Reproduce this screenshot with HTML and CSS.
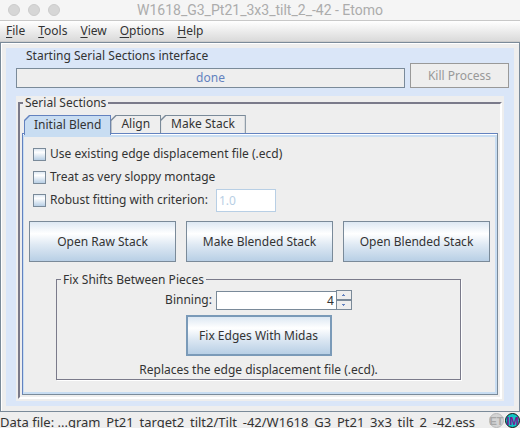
FILE: index.html
```html
<!DOCTYPE html>
<html lang="en">
<head>
<meta charset="utf-8">
<title>W1618_G3_Pt21_3x3_tilt_2_-42 - Etomo</title>
<link rel="stylesheet" href="styles.css">
</head>
<body>
<header class="titlebar">
  <div class="lights"><i></i><i></i><i></i></div>
  <h1>W1618_G3_Pt21_3x3_tilt_2_-42 - Etomo</h1>
</header>
<nav class="menubar">
  <button><u>F</u>ile</button>
  <button><u>T</u>ools</button>
  <button><u>V</u>iew</button>
  <button><u>O</u>ptions</button>
  <button><u>H</u>elp</button>
</nav>
<main class="frame">
  <div class="desk">
    <section class="process">
      <div class="progress">
        <div class="progress-label" id="progress-label">Starting Serial Sections interface</div>
        <div class="bar" role="progressbar" aria-labelledby="progress-label">done</div>
      </div>
      <button class="kill" disabled>Kill Process</button>
    </section>
    <div class="panel">
      <fieldset class="serial">
        <legend>Serial Sections</legend>
        <div class="tabs" role="tablist">
          <button class="tab selected" role="tab" aria-selected="true">Initial Blend</button>
          <button class="tab" role="tab" aria-selected="false">Align</button>
          <button class="tab" role="tab" aria-selected="false">Make Stack</button>
        </div>
        <div class="page" role="tabpanel">
          <div class="options">
            <label class="check"><input type="checkbox">Use existing edge displacement file (.ecd)</label>
            <label class="check"><input type="checkbox">Treat as very sloppy montage</label>
            <div class="criterion">
              <label class="check"><input type="checkbox">Robust fitting with criterion:</label>
              <input class="value" type="text" value="1.0" aria-label="Criterion" disabled>
            </div>
          </div>
          <div class="actions">
            <button class="push">Open Raw Stack</button>
            <button class="push">Make Blended Stack</button>
            <button class="push">Open Blended Stack</button>
          </div>
          <fieldset class="fix">
            <legend>Fix Shifts Between Pieces</legend>
            <div class="binning">
              <label for="binning">Binning:</label>
              <input id="binning" type="text" value="4">
              <div class="steps">
                <button aria-label="Increase"><svg viewBox="0 0 5 3"><path d="M2 0h1v1h1v1H1V1h1z"/></svg></button>
                <button aria-label="Decrease"><svg viewBox="0 0 5 3"><path d="M1 0h3v1H3v1H2V1H1z"/></svg></button>
              </div>
            </div>
            <button class="push focused">Fix Edges With Midas</button>
            <p>Replaces the edge displacement file (.ecd).</p>
          </fieldset>
        </div>
      </fieldset>
    </div>
  </div>
</main>
<footer class="status">
  <span class="path">Data file: ...gram_Pt21_target2_tilt2/Tilt_-42/W1618_G3_Pt21_3x3_tilt_2_-42.ess</span>
  <svg class="badges" viewBox="0 0 31 15">
    <circle cx="7.500" cy="7.500" r="7" fill="#d4d4d4" stroke="#b8b8b8"/>
    <text x="7.500" y="12" fill="#a8a8a8">ET</text>
    <circle cx="23.500" cy="7.500" r="7" fill="#10c4c4" stroke="#111"/>
    <text x="23.500" y="12" fill="#7b1591">IM</text>
  </svg>
</footer>
</body>
</html>
```
FILE: styles.css
```css
* {
  box-sizing: border-box;
}

body {
  margin: 0;
  height: 100vh;
  overflow: hidden;
  display: flex;
  flex-direction: column;
  background: #eee;
  color: #333;
  font: 12px/16px "Noto Sans", "Open Sans", sans-serif;
}

button,
input {
  margin: 0;
  padding: 0;
  border-radius: 0;
  color: inherit;
  font: inherit;
}

fieldset {
  margin: 0;
  min-width: 0;
}

.titlebar {
  display: grid;
  grid-template-columns: 1fr auto 1fr;
  align-items: center;
  height: 21px;
  flex: none;
  border-bottom: 1px solid #c8c8c8;
  background: #f5f5f5;
}

.lights {
  display: flex;
  gap: 8px;
  padding-left: 8px;
}

.lights i {
  width: 12px;
  height: 12px;
  border: 1px solid #ccc;
  border-radius: 50%;
  background: #d6d6d6;
}

h1 {
  margin: 0;
  color: #acacac;
  font: 14px/20px Roboto, sans-serif;
}

.menubar {
  display: flex;
  gap: 13px;
  height: 21px;
  flex: none;
  padding: 0 6px;
  border-bottom: 1px solid #ccc;
  background: linear-gradient(#fff, #dadada);
}

.menubar button {
  border: 0;
  background: none;
  line-height: 20px;
}

.menubar u {
  text-underline-offset: 2px;
}

.frame {
  flex: none;
  padding: 5px;
  border: 1px solid #7a8a99;
  box-shadow: inset 1px 1px #fff;
}

.desk {
  padding: 0 10px 5px;
  background: #dae6f8;
}

.process {
  display: flex;
  align-items: flex-end;
  gap: 5px;
  margin-right: -5px;
  height: 40px;
}

.progress {
  flex: 1;
}

.progress-label {
  padding: 0 10px 4px;
}

.bar {
  height: 20px;
  border: 1px solid #7a8a99;
  background: #eee;
  color: #6382bf;
  line-height: 18px;
  text-align: center;
}

.kill {
  width: 99px;
  height: 25px;
  border: 1px solid #999;
  background: #eee;
  color: #999;
}

.panel {
  margin-top: 8px;
  padding: 0 2px 2px;
  background: #eee;
}

.serial {
  padding: 5px 2px 2px;
  border: 2px solid;
  border-color: #7a7a8a #fff #fff #7a7a8a;
}

.serial > legend {
  margin-left: 1px;
  padding: 0 2px;
  line-height: 14px;
}

.tabs {
  display: flex;
  position: relative;
  padding-left: 2px;
}

.tab {
  position: relative;
  isolation: isolate;
  height: 18px;
  margin-right: -1px;
  padding: 0 11px;
  border: 0;
  background: #7a8a99;
  clip-path: polygon(5px 0, 100% 0, 100% 100%, 0 100%, 0 5px);
}

.tab::before {
  content: "";
  position: absolute;
  z-index: -1;
  inset: 1px 1px 0;
  background: #eee;
  clip-path: polygon(5px 0, 100% 0, 100% 100%, 0 100%, 0 5px);
}

.tab.selected {
  height: 20px;
  margin-bottom: -2px;
  padding: 0 10px;
  background: #6382bf;
}

.tab.selected::before {
  background: #c8ddf2;
}

.page {
  padding: 10px 6px 14px;
  border: 1px solid #7a8a99;
  border-color: #6382bf #7a8a99 #7a8a99 #6382bf;
  box-shadow: inset 0 1px #fff, inset -2px -2px #c8ddf2, inset 1px 3px #c8ddf2;
}

.options {
  display: flex;
  flex-direction: column;
  align-items: flex-start;
  gap: 3px;
  padding-left: 4px;
}

.check {
  display: flex;
  align-items: center;
  gap: 4px;
  height: 20px;
}

.check input {
  appearance: none;
  width: 13px;
  height: 13px;
  border: 1px solid #7a8a99;
  background: linear-gradient(#dde8f3, #fff 30%, #b8cfe5);
}

.criterion {
  display: flex;
  align-items: center;
  gap: 8px;
  height: 20px;
}

.value {
  width: 60px;
  height: 23px;
  padding: 0 2px;
  border: 1px solid #b8cfe5;
  background: #fff;
  color: #b8cfe5;
}

.actions {
  display: grid;
  grid-template-columns: repeat(3, 1fr);
  gap: 10px;
  margin: 11px 1px 0 0;
}

.push {
  height: 41px;
  border: 1px solid #7a8a99;
  background: linear-gradient(#dde8f3, #fff 30%, #dde8f3 60%, #b8cfe5);
}

.fix {
  display: flex;
  flex-direction: column;
  align-items: center;
  margin: 10px 30px 0 27px;
  padding: 3px 0 1px;
  border: 1px solid #7a7a8a;
  box-shadow: 1px 1px #fff;
}

.fix legend {
  margin-left: 4px;
  padding: 0 2px;
  line-height: 15px;
}

.binning {
  display: flex;
  align-items: center;
  gap: 4px;
}

.binning input {
  width: 121px;
  height: 19px;
  padding: 0 2px;
  border: 1px solid #7a8a99;
  text-align: right;
}

.steps {
  display: grid;
  width: 16px;
  margin-left: -5px;
}

.steps button {
  display: grid;
  place-items: center;
  height: 10px;
  border: 1px solid #7a8a99;
  background: #eee;
}

.steps svg {
  width: 5px;
  height: 3px;
  fill: #6382bf;
}

.focused {
  width: 146px;
  margin-top: 5px;
  border: 2px solid #7a9ab8;
}

.fix p {
  margin: 6px 0 0;
}

.status {
  display: flex;
  flex: 1;
  justify-content: space-between;
  min-height: 0;
  padding-top: 1px;
  overflow: hidden;
}

.path {
  font-size: 13px;
  line-height: 18px;
  white-space: nowrap;
}

.badges {
  flex: none;
  width: 31px;
  height: 15px;
}

.badges text {
  font: bold 11px "Liberation Sans", sans-serif;
  text-anchor: middle;
}
```
